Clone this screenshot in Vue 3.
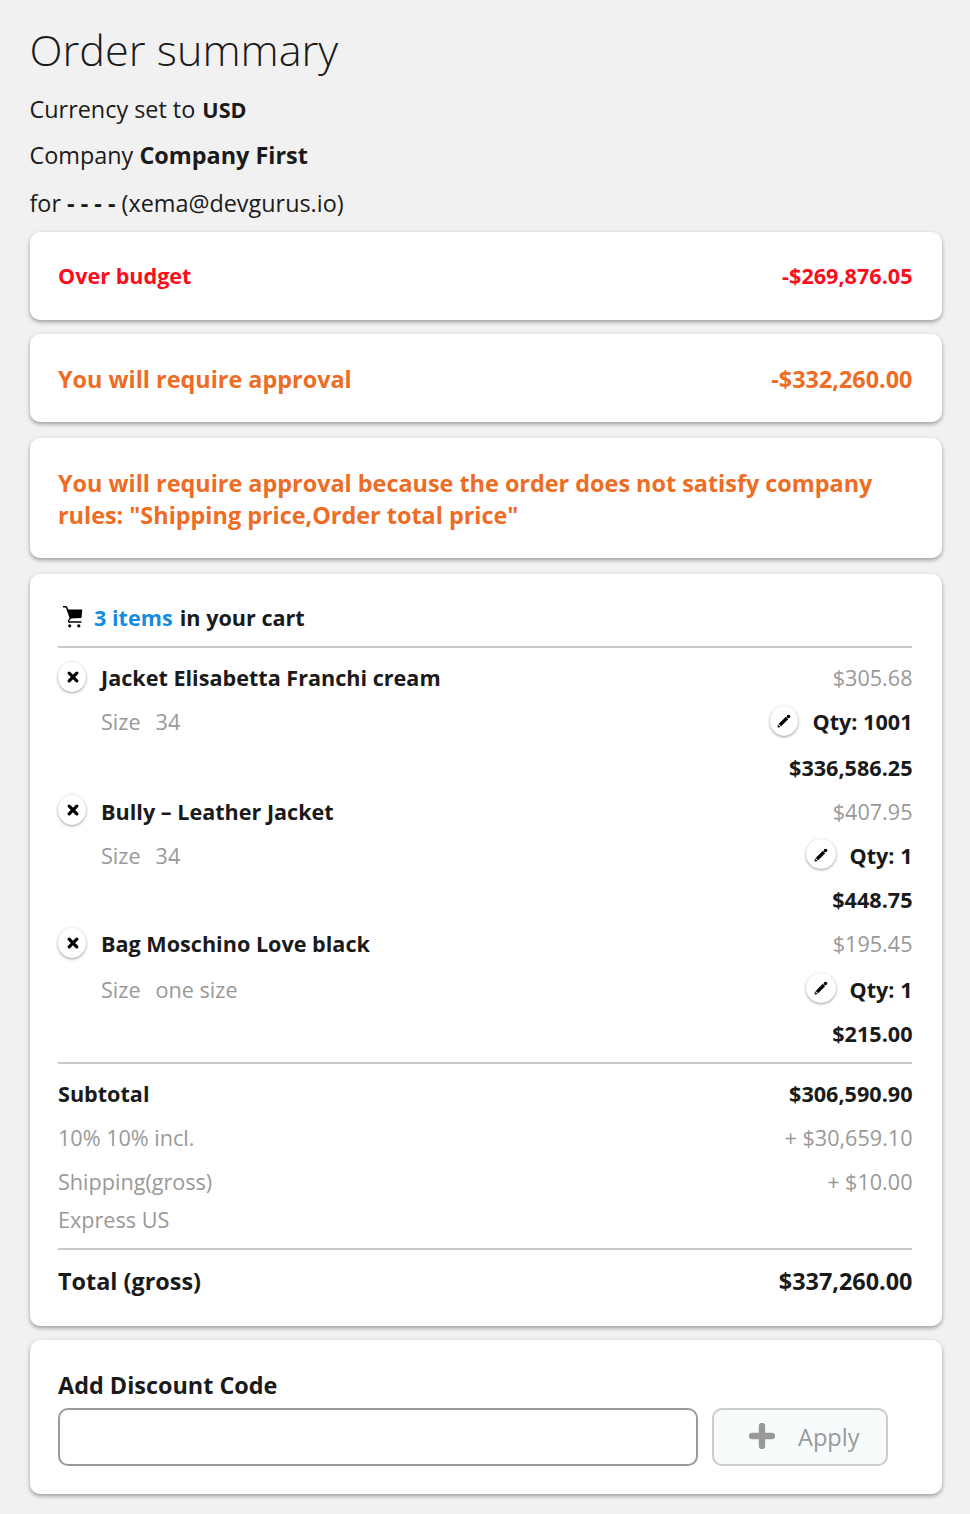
<script setup>
const items = [
  { name: 'Jacket Elisabetta Franchi cream', price: '$305.68', size: '34', qty: 1001, total: '$336,586.25', mod: 'first' },
  { name: 'Bully – Leather Jacket', price: '$407.95', size: '34', qty: 1, total: '$448.75', mod: 'second' },
  { name: 'Bag Moschino Love black', price: '$195.45', size: 'one size', qty: 1, total: '$215.00', mod: 'third' },
]
</script>

<template>
  <main class="page">
    <h1>Order summary</h1>
    <p class="meta currency">Currency set to <b>USD</b></p>
    <p class="meta company">Company <b>Company First</b></p>
    <p class="meta user">for <b>- - - -</b> (xema@devgurus.io)</p>

    <section class="card notice over"><span>Over budget</span><span>-$269,876.05</span></section>
    <section class="card notice approval"><span>You will require approval</span><span>-$332,260.00</span></section>
    <section class="card notice reason">You will require approval because the order does not satisfy company rules: "Shipping price,Order total price"</section>

    <section class="card cart">
      <header class="cart-head">
        <svg class="cart-icon" viewBox="0 0 22 24">
          <path d="M1.500 1.700h2q.8 0 1.200.8l3.800 10.700" fill="none" stroke="#000" stroke-width="1.500" stroke-linecap="round" />
          <path d="M4.800 4.500h15.400l-.5 7.600q-.1.700-.8.800L8.300 13.600z" />
          <path d="M8.300 13.200L6.600 15.700q-.5 1.300.7 1.300h11.700" fill="none" stroke="#000" stroke-width="1.300" stroke-linecap="round" />
          <circle cx="7.700" cy="20.800" r="1.600" />
          <circle cx="16.800" cy="20.800" r="1.600" />
        </svg>
        <span><a>3 items</a> in your cart</span>
      </header>

      <article v-for="item in items" :key="item.name" class="item" :class="item.mod">
        <div class="row">
          <button class="round remove" aria-label="Remove">
            <svg viewBox="0 0 12 12"><path d="M2.200 2.200l7.600 7.600M9.800 2.200l-7.600 7.600" /></svg>
          </button>
          <span class="name">{{ item.name }}</span>
          <span class="muted end">{{ item.price }}</span>
        </div>
        <div class="row size-row muted">
          <span class="size-label">Size</span><span>{{ item.size }}</span>
          <span class="qty end">
            <button class="round edit" aria-label="Edit">
              <svg viewBox="0 0 14 14">
                <path d="M2.900 11.100L10 4" stroke="#000" stroke-width="3.400" />
                <circle cx="11.500" cy="2.500" r="1.800" />
                <path d="M1 10.200l.8.800-.2 1.300 1.300-.2.700.8-2.300.6q-.8.100-.7-.7z" />
              </svg>
            </button>
            <b>Qty: {{ item.qty }}</b>
          </span>
        </div>
        <div class="row line-total"><b class="end">{{ item.total }}</b></div>
      </article>

      <div class="totals">
        <div class="row"><b>Subtotal</b><b class="end">$306,590.90</b></div>
        <div class="row muted"><span>10% 10% incl.</span><span class="end">+ $30,659.10</span></div>
        <div class="row muted"><span>Shipping(gross)</span><span class="end">+ $10.00</span></div>
        <div class="row muted method">Express US</div>
      </div>
      <div class="row grand"><b>Total (gross)</b><b class="end">$337,260.00</b></div>
    </section>

    <section class="card discount">
      <label for="code">Add Discount Code</label>
      <div class="form">
        <input id="code" type="text" />
        <button class="apply" disabled>
          <svg viewBox="0 0 26 26"><path d="M13 3v20M3 13h20" /></svg>
          <span>Apply</span>
        </button>
      </div>
    </section>
  </main>
</template>

<style>
body { background: #f1f1f1; }
</style>

<style scoped>
* { box-sizing: border-box; }
.page {
  min-height: 1514px;
  padding: 20px 28px 0 30px;
  background: #f1f1f1;
  color: #1a1a1a;
  font: 21.600px/44px "Open Sans", "Noto Sans", sans-serif;
}
h1 { margin: 0 0 0 -.5px; font-size: 43.200px; font-weight: 300; line-height: 60px; height: 66px; }
.meta { margin: 0 0 0 -.5px; font-size: 23.400px; line-height: 46px; white-space: nowrap; }
.currency { height: 46px; }
.currency b { margin-left: 1px; font-size: 21.600px; }
.company { height: 48px; }
.user { height: 52px; }
b { font-weight: 700; }
.card {
  background: #fff;
  border-radius: 10px;
  box-shadow: 0 2px 4px rgba(0, 0, 0, .36);
  padding: 0 29.500px 0 28px;
}
.notice { display: flex; justify-content: space-between; align-items: center; height: 88px; font-weight: 700; }
.over { color: #fc0d1b; margin-bottom: 14px; }
.approval { color: #ee6c23; font-size: 23.400px; padding-top: 2px; margin-bottom: 16px; }
.reason { color: #ee6c23; font-size: 23.400px; line-height: 32px; height: 120px; padding-top: 2px; margin-bottom: 16px; }
.cart { height: 752px; margin-bottom: 14px; }
.cart-head { display: flex; align-items: center; height: 74px; margin-right: .5px; padding-top: 16px; border-bottom: 2px solid #c8c8c8; font-weight: 700; }
.cart-head a { color: #168ddc; margin-right: 1.500px; }
.cart-icon { width: 22px; height: 24px; margin: 0 10px 2px 4px; }
.row { display: flex; align-items: center; height: 44px; white-space: nowrap; }
.end { margin-left: auto; }
.muted { color: #999; }
.first { padding-top: 8px; }
.first .line-total, .third .size-row { margin-top: 2px; }
.name { color: #1a1a1a; font-weight: 700; }
.size-row { padding-left: 43px; }
.size-label { margin-right: 15px; }
.qty { display: flex; align-items: center; color: #1a1a1a; }
.round {
  display: flex;
  align-items: center;
  justify-content: center;
  flex: none;
  width: 28px;
  height: 30px;
  padding: 0;
  border: 0;
  border-radius: 50%;
  background: #fff;
  box-shadow: 0 1px 3px rgba(0, 0, 0, .4);
}
.remove { margin: 0 15px 2px 0; }
.second .remove { margin-bottom: 4px; }
.remove svg { width: 12px; height: 12px; margin-left: 2px; fill: none; stroke: #000; stroke-width: 3.200; stroke-linecap: round; }
.edit { margin: 0 15px 2px 0; }
.edit svg { width: 14px; height: 14px; }
.second .edit, .third .edit { width: 30px; margin: 0 14px 4px 0; }
.second .edit svg { margin-top: 2px; }
.totals { margin: 6px .5px 0 0; padding-top: 8px; height: 188px; border: solid #c8c8c8; border-width: 2px 0; }
.totals .end { margin-right: -.5px; }
.method { height: 32px; }
.grand { height: 62px; font-size: 23.400px; }
.discount { height: 154px; padding-top: 28px; }
.discount label { display: block; height: 40px; font-size: 23.400px; font-weight: 700; line-height: 34px; }
.form { display: flex; gap: 14px; }
input { width: 640px; height: 58px; padding: 0 12px; border: 2px solid #999; border-radius: 10px; background: #fff; font: inherit; }
.apply {
  display: flex;
  align-items: center;
  width: 176px;
  height: 58px;
  padding: 0 0 0 35px;
  border: 2px solid #ccc;
  border-radius: 10px;
  background: #f7fbfc;
  color: #999;
  font: 23.600px/54px "Open Sans", "Noto Sans", sans-serif;
}
.apply svg { width: 26px; height: 26px; margin: 0 23px 2px 0; fill: none; stroke: #999; stroke-width: 6.400; stroke-linecap: round; }
</style>
